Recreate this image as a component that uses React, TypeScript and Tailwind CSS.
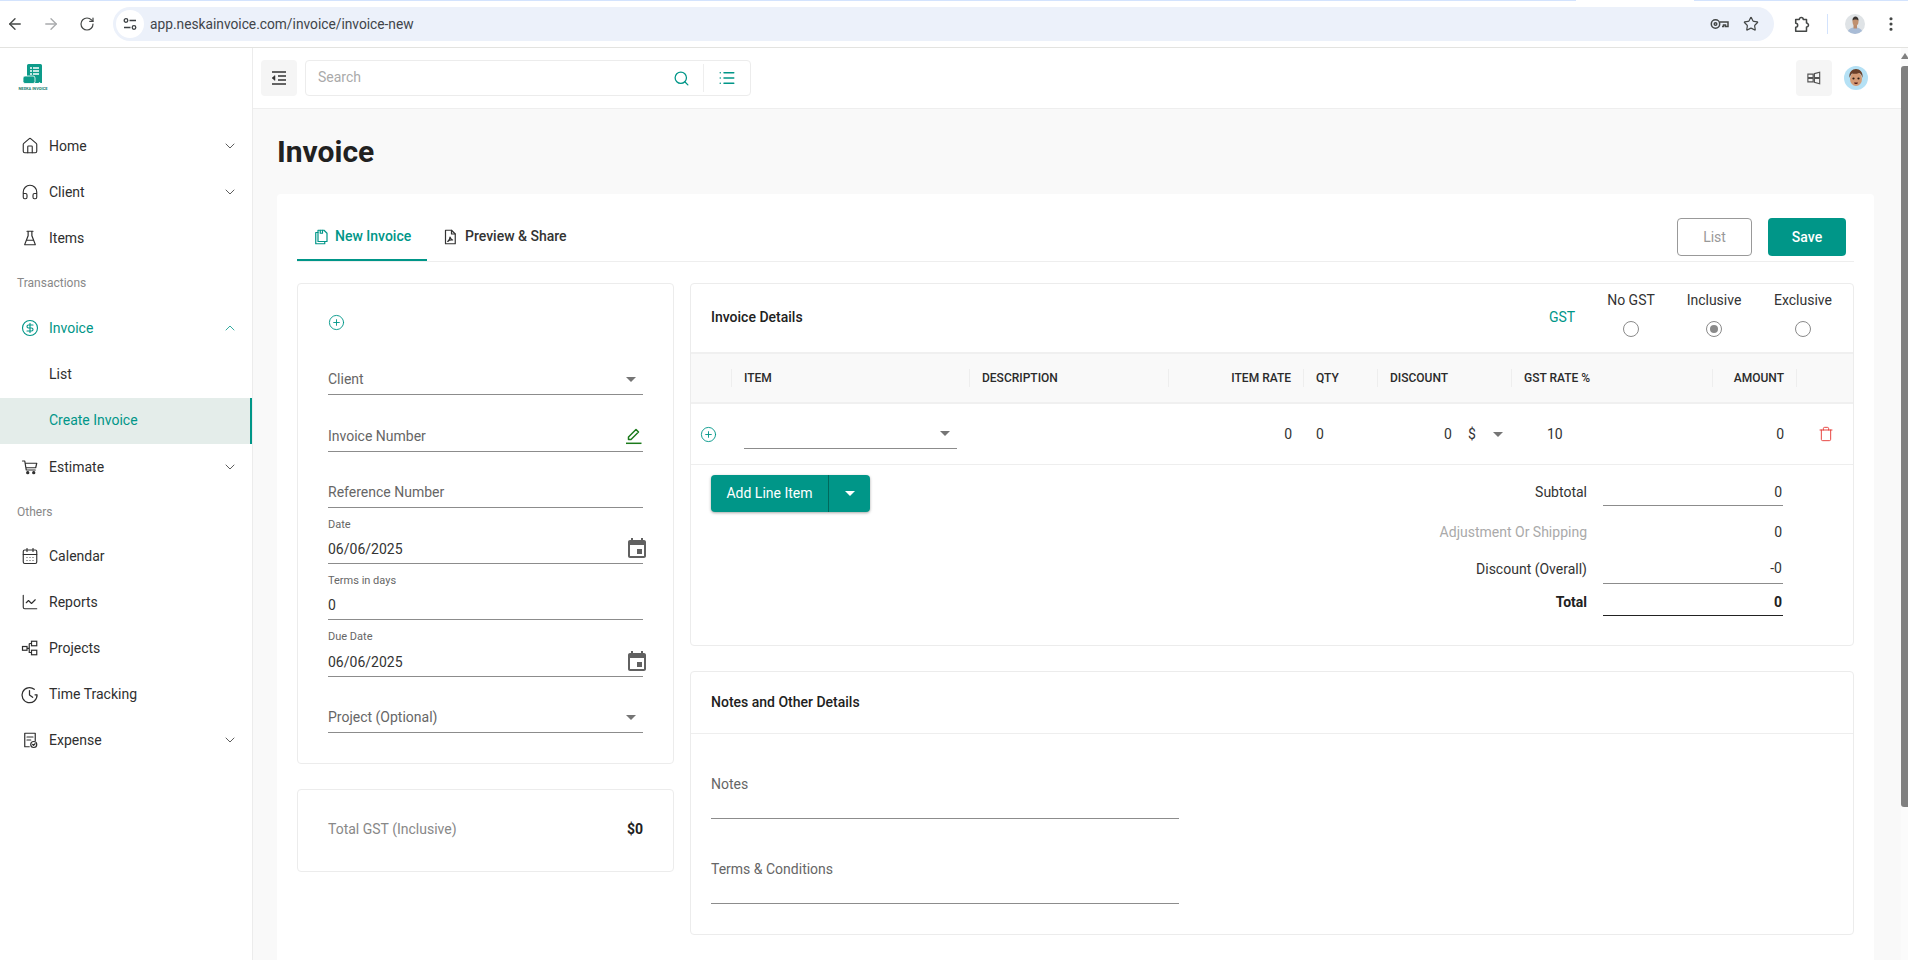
import type { ReactNode } from 'react'
import {
  ArrowLeft,
  ArrowRight,
  CalendarDays,
  ChartLine,
  ChevronDown,
  ChevronUp,
  CirclePlus,
  CircleDollarSign,
  EllipsisVertical,
  Headphones,
  House,
  List,
  RotateCw,
  Search,
  Star,
  Trash,
} from 'lucide-react'

// small hand drawn glyphs, lucide has no close match for these

function Caret({ color = '#757575' }: { color?: string }) {
  return (
    <svg width="10" height="5" viewBox="0 0 10 5" className="shrink-0">
      <polygon points="0,0 10,0 5,5" fill={color} />
    </svg>
  )
}

function Glyph({ children, size = 18, className = '' }: { children: ReactNode; size?: number; className?: string }) {
  return (
    <svg
      width={size}
      height={size}
      viewBox="0 0 24 24"
      fill="none"
      stroke="currentColor"
      strokeWidth="1.6"
      strokeLinecap="round"
      strokeLinejoin="round"
      className={`shrink-0 ${className}`}
    >
      {children}
    </svg>
  )
}

function FlaskIcon() {
  return (
    <Glyph>
      <path d="M8 3h8M9.500 3v6L5 20.500V21h14v-.5L14.500 9V3M7.500 15h9" />
    </Glyph>
  )
}

function CartIcon() {
  return (
    <Glyph>
      <path d="M2 4h3l2 12h12M5.600 7H21l-1.400 6H6.600" />
      <circle cx="9" cy="19.500" r="1.400" fill="currentColor" />
      <circle cx="17" cy="19.500" r="1.400" fill="currentColor" />
    </Glyph>
  )
}

function ProjectsIcon() {
  return (
    <Glyph>
      <g strokeLinejoin="miter" strokeLinecap="butt">
        <rect x="2" y="10" width="6" height="5" />
        <rect x="14" y="3" width="7" height="6" />
        <rect x="14" y="15" width="7" height="6" />
        <path d="M8 12.500h3M11 6v12.500M11 6h3M11 18h3" />
      </g>
    </Glyph>
  )
}

function ClockIcon() {
  return (
    <Glyph size={19}>
      <path d="M18 5.500A9.500 9.500 0 1 0 21.500 12.500" />
      <path d="M12 7v5.500l4 3M21 12.500l-2-.1" />
    </Glyph>
  )
}

function ExpenseIcon() {
  return (
    <Glyph>
      <path d="M11 21H5V3h14v10" />
      <path d="M8 8h8M8 12h5" />
      <circle cx="17" cy="18" r="4" />
      <path d="m15.500 18 1.200 1.200 2-2.200" />
    </Glyph>
  )
}

function CopyFileIcon() {
  return (
    <Glyph size={18}>
      <path d="M8 6H5v15h12v-3" />
      <path d="M8 3h8l4 4v11H8z" />
      <path d="M11 3v4h3V3" />
    </Glyph>
  )
}

function PdfFileIcon() {
  return (
    <Glyph size={18}>
      <path d="M6 3h8l5 5v13H6z" />
      <path d="M14 3v5h5M9 18c2-1.500 3-4 3-6 .5 2 2 3.500 3.500 4-2-.3-4.500 0-6.500 2z" />
    </Glyph>
  )
}

function EventIcon() {
  return (
    <svg width="24" height="24" viewBox="0 0 24 24" fill="#616161" className="-mr-[6px] -mt-[2px] shrink-0">
      <path d="M17 12h-5v5h5v-5zM16 1v2H8V1H6v2H5c-1.110 0-1.990.9-1.990 2L3 19c0 1.100.89 2 2 2h14c1.100 0 2-.9 2-2V5c0-1.100-.9-2-2-2h-1V1h-2zm3 18H5V8h14v11z" />
    </svg>
  )
}

function PencilIcon() {
  return (
    <svg width="18" height="18" viewBox="0 0 18 18" fill="none" stroke="#1b7a1b" strokeWidth="1.500" className="shrink-0">
      <path d="M3.500 12.500v-2.500l7.500-7.500 2.500 2.500-7.500 7.500z" strokeLinejoin="round" />
      <path d="M1 16.300h15.500" />
    </svg>
  )
}

function TuneIcon() {
  return (
    <svg width="14" height="14" viewBox="0 0 14 14" fill="none" stroke="#3c4043" strokeWidth="1.300">
      <circle cx="3" cy="3.500" r="1.800" />
      <path d="M6.500 3.500H13M1 10.500h6.500" />
      <circle cx="11" cy="10.500" r="1.800" />
    </svg>
  )
}

function KeyIcon() {
  return (
    <svg width="19" height="12" viewBox="0 0 19 12" fill="none" stroke="#444746" strokeWidth="1.500">
      <circle cx="5.500" cy="6" r="4.200" />
      <circle cx="5.500" cy="6" r="1.300" />
      <path d="M9.700 4h8.300v4.500h-2.500V7h-2v1.500h-1.500M9.700 8" />
    </svg>
  )
}

function ExtensionIcon() {
  return (
    <svg width="18" height="18" viewBox="0 0 20 20" fill="none" stroke="#444746" strokeWidth="1.700" strokeLinejoin="round">
      <path d="M3 5h4a2.200 2.200 0 1 1 4.400 0H15v4a2.200 2.200 0 1 1 0 4.400V18H3v-4.500a2.200 2.200 0 1 0 0-4.400z" />
    </svg>
  )
}

function IndentIcon() {
  return (
    <svg width="16" height="14" viewBox="0 0 16 14" fill="none" stroke="#333" strokeWidth="1.300">
      <path d="M1 1h14M7 5h8M7 9h8M1 13h14" />
      <polygon points="4,4.500 4,9.500 1,7" fill="#333" strokeWidth="0.500" />
    </svg>
  )
}

function WindowsIcon() {
  return (
    <svg width="14" height="14" viewBox="0 0 16 16" fill="none" stroke="#555" strokeWidth="1.300">
      <path d="M1 3.500h6v4H1zM1 8.500h6v4H1zM8.500 3l6-1.500v6h-6zM8.500 8.500h6v6l-6-1.500z" />
    </svg>
  )
}

function Logo() {
  return (
    <div className="flex w-[28px] flex-col items-center">
      <svg width="22" height="20" viewBox="0 0 22 20">
        <path d="M5 1.500Q5 0 6.500 0h12Q20 0 20 1.500V19h-1.500l-1-1-1 1H5z" fill="#0d9b8a" />
        <rect x="1" y="12" width="12" height="7.500" rx="2" fill="#0d9b8a" stroke="#fff" strokeWidth="0.800" />
        <path d="M8 4h2M11 4h6M8 7h2M11 7h6M8 10h2M11 10h6" stroke="#fff" strokeWidth="1.300" />
      </svg>
      <span className="mt-[3px] text-[4px] leading-[4px] font-bold whitespace-nowrap text-[#137a6e]">NESKA INVOICE</span>
    </div>
  )
}

function BrowserAvatar() {
  return (
    <svg width="20" height="20" viewBox="0 0 20 20" className="rounded-full">
      <rect width="20" height="20" fill="#dfe3e6" />
      <path d="M2 20c.5-5 4-6.500 8-6.500s7.500 1.500 8 6.500z" fill="#a9bcd6" />
      <rect x="8.500" y="10" width="3.500" height="4.500" fill="#b98a6c" />
      <ellipse cx="10.500" cy="7.500" rx="3" ry="4" fill="#c0906f" />
      <path d="M7.500 6.500c0-3 1.500-4 3-4s3 1 3 4c-1-1.500-5-1.500-6 0z" fill="#3a3330" />
    </svg>
  )
}

function MemojiAvatar() {
  return (
    <svg width="24" height="24" viewBox="0 0 24 24" className="rounded-full">
      <rect width="24" height="24" fill="#b5e1f5" />
      <ellipse cx="12" cy="13" rx="6" ry="7" fill="#d39a74" />
      <path d="M5.500 12c-1-6 3-9 6.500-9s7.500 3 6.500 9c-.5-3-2-4.500-3.500-5-2 1-5.500 1-7 .5-1 1-2 2.500-2.500 4.500z" fill="#6a3f28" />
      <circle cx="9.500" cy="12.500" r="1.100" fill="#2b1c14" />
      <circle cx="14.500" cy="12.500" r="1.100" fill="#2b1c14" />
      <path d="M10 16.500h4l-.8 1.500h-2.400z" fill="#5a1f1a" />
    </svg>
  )
}

function BrowserBar() {
  return (
    <header className="flex h-[48px] shrink-0 flex-col border-b border-[#e3e3e0] bg-white">
      <div className="flex h-[1px] shrink-0">
        <div className="w-[1576px] bg-[#d3e3fd]" />
        <div className="w-[118px] bg-white" />
        <div className="flex-1 bg-[#d3e3fd]" />
      </div>
      <div className="flex flex-1 items-center text-[#444746]">
        <div className="flex w-[113px] shrink-0 items-center pl-[6px]">
          <ArrowLeft size={18} strokeWidth={1.800} />
          <ArrowRight size={18} strokeWidth={1.800} className="ml-[18px] text-[#a9abad]" />
          <RotateCw size={16} strokeWidth={1.800} className="ml-[19px]" />
        </div>
        <div className="flex h-[34px] w-[1661px] shrink-0 items-center rounded-full bg-[#ecf1fa] pr-[15px] pl-[3px]">
          <div className="flex h-[28px] w-[28px] items-center justify-center rounded-full bg-white">
            <TuneIcon />
          </div>
          <span className="ml-[6px] flex-1 text-[13.750px] text-[#41454a]">app.neskainvoice.com/invoice/invoice-new</span>
          <KeyIcon />
          <Star size={16} strokeWidth={1.800} className="ml-[14px]" />
        </div>
        <span className="ml-[19px]">
          <ExtensionIcon />
        </span>
        <div className="ml-[16px] h-[20px] w-px bg-[#d3e3fd]" />
        <div className="ml-[17px]">
          <BrowserAvatar />
        </div>
        <EllipsisVertical size={18} strokeWidth={2.200} className="ml-[17px]" />
      </div>
    </header>
  )
}

function NavRow({
  icon,
  label,
  chevron,
  active,
}: {
  icon?: ReactNode
  label: string
  chevron?: 'up' | 'down'
  active?: boolean
}) {
  return (
    <div className={`flex h-[46px] items-center pr-[14px] text-[14px] ${active ? 'text-[#009688]' : 'text-[#2f2f2f]'}`}>
      <span className="flex w-[49px] shrink-0 justify-center pl-[10px]">{icon}</span>
      <span className="flex-1">{label}</span>
      {chevron === 'down' && <ChevronDown size={16} strokeWidth={1.200} className="text-[#333]" />}
      {chevron === 'up' && <ChevronUp size={16} strokeWidth={1.200} className="text-[#009688]" />}
    </div>
  )
}

function Sidebar() {
  return (
    <aside className="w-[253px] shrink-0 border-r border-[#ececec] bg-white">
      <div className="flex h-[75px] items-start pt-[16px] pl-[19px]">
        <Logo />
      </div>
      <NavRow icon={<House size={18} strokeWidth={1.500} />} label="Home" chevron="down" />
      <NavRow icon={<Headphones size={18} strokeWidth={1.500} />} label="Client" chevron="down" />
      <NavRow icon={<FlaskIcon />} label="Items" />
      <div className="flex h-[44px] items-center pl-[17px] text-[12px] text-[#888]">Transactions</div>
      <NavRow active icon={<CircleDollarSign size={18} strokeWidth={1.500} />} label="Invoice" chevron="up" />
      <NavRow label="List" />
      <div className="mt-px flex h-[46px] items-center border-r-2 border-[#009688] bg-[#e4edea] pb-px pl-[49px] text-[14px] text-[#009688]">
        Create Invoice
      </div>
      <NavRow icon={<CartIcon />} label="Estimate" chevron="down" />
      <div className="flex h-[43px] items-center pl-[17px] text-[12px] text-[#888]">Others</div>
      <NavRow icon={<CalendarDays size={18} strokeWidth={1.500} />} label="Calendar" />
      <NavRow icon={<ChartLine size={18} strokeWidth={1.500} />} label="Reports" />
      <NavRow icon={<ProjectsIcon />} label="Projects" />
      <NavRow icon={<ClockIcon />} label="Time Tracking" />
      <NavRow icon={<ExpenseIcon />} label="Expense" chevron="down" />
    </aside>
  )
}

function TopBar() {
  return (
    <div className="flex h-[61px] shrink-0 items-center border-b border-[#eeeeee] bg-white pr-[33px] pl-[8px]">
      <button className="flex h-[36px] w-[36px] items-center justify-center rounded-[4px] bg-[#f5f5f5]">
        <IndentIcon />
      </button>
      <div className="ml-[8px] flex h-[36px] w-[446px] items-center rounded-[4px] border border-[#ececec] pl-[12px] text-[14px] text-[#aaa]">
        <span className="flex-1 pb-[2px]">Search</span>
        <Search size={17} strokeWidth={1.800} className="mr-[13px] text-[#009688]" />
        <div className="h-[28px] w-px bg-[#eeeeee]" />
        <List size={18} strokeWidth={2} className="mx-[14px] text-[#009688]" />
      </div>
      <div className="flex-1" />
      <button className="flex h-[36px] w-[36px] items-center justify-center rounded-[4px] bg-[#f5f5f5]">
        <WindowsIcon />
      </button>
      <div className="ml-[12px]">
        <MemojiAvatar />
      </div>
    </div>
  )
}

function Line({ className = '', children }: { className?: string; children?: ReactNode }) {
  return (
    <div className={`flex h-[30px] items-center justify-between border-b border-[#8c8c8c] text-[14px] ${className}`}>
      {children}
    </div>
  )
}

function SmallLabel({ className = '', children }: { className?: string; children: ReactNode }) {
  return <div className={`flex h-[16px] items-center text-[11px] text-[#666] ${className}`}>{children}</div>
}

function InvoiceForm() {
  return (
    <div className="rounded-[4px] border border-[#ececec] pt-[30px] pr-[30px] pb-[30px] pl-[30px]">
      <CirclePlus size={17} strokeWidth={1.300} className="text-[#009688]" />
      <Line className="mt-[34px] pb-px text-[#666]">
        Client
        <span className="pr-[7px]">
          <Caret />
        </span>
      </Line>
      <Line className="mt-[27px] pb-px text-[#666]">
        Invoice Number
        <PencilIcon />
      </Line>
      <Line className="mt-[26px] pb-px text-[#666]">Reference Number</Line>
      <SmallLabel className="mt-[9px]">Date</SmallLabel>
      <Line className="mt-[1px] pt-[2px] text-[#333]">
        06/06/2025
        <EventIcon />
      </Line>
      <SmallLabel className="mt-[9px]">Terms in days</SmallLabel>
      <Line className="mt-[1px] pt-[2px] text-[#333]">0</Line>
      <SmallLabel className="mt-[9px]">Due Date</SmallLabel>
      <Line className="mt-[2px] pt-[2px] text-[#333]">
        06/06/2025
        <EventIcon />
      </Line>
      <Line className="mt-[26px] pb-px text-[#666]">
        Project (Optional)
        <span className="pr-[7px]">
          <Caret />
        </span>
      </Line>
    </div>
  )
}

function Radio({ label, checked, width }: { label: string; checked?: boolean; width: string }) {
  return (
    <div className={`-mt-[5px] flex flex-col items-center gap-[13px] text-[14px] text-[#333] ${width}`}>
      <span className="leading-[16px]">{label}</span>
      <span className="flex h-[16px] w-[16px] items-center justify-center rounded-full border border-[#8a8a8a]">
        {checked && <span className="h-[8px] w-[8px] rounded-full bg-[#8a8a8a]" />}
      </span>
    </div>
  )
}

const tableCols = 'grid grid-cols-[40px_238px_199px_135px_74px_134px_201px_84px_57px]'

function HeadCell({ label, right }: { label?: string; right?: boolean }) {
  return (
    <div className={`flex h-[18px] items-center border-l border-[#eeeeee] px-[12px] ${right ? 'justify-end' : ''}`}>
      {label}
    </div>
  )
}

function TotalRow({
  label,
  value,
  className = '',
  textClass = '',
  labelClass = 'text-[#333]',
  valueClass = 'border-b border-[#8c8c8c] text-[#333]',
}: {
  label: string
  value: string
  className?: string
  textClass?: string
  labelClass?: string
  valueClass?: string
}) {
  return (
    <div className={`flex h-[30px] items-center justify-end gap-[16px] text-[14px] ${className}`}>
      <span className={`${labelClass} ${textClass}`}>{label}</span>
      <span className={`flex h-[30px] w-[180px] items-center justify-end pr-px ${valueClass} ${textClass}`}>{value}</span>
    </div>
  )
}

function InvoiceDetails() {
  return (
    <div className="flex h-[363px] flex-col rounded-[4px] border border-[#ececec]">
      <div className="flex h-[68px] shrink-0 items-center justify-between pr-[6px] pb-[2px] pl-[20px]">
        <span className="text-[14px] font-medium text-[#212121]">Invoice Details</span>
        <div className="flex items-center">
          <span className="w-[44px] text-[14px] text-[#009688]">GST</span>
          <Radio label="No GST" width="w-[76px]" />
          <Radio label="Inclusive" checked width="w-[90px]" />
          <Radio label="Exclusive" width="w-[88px]" />
        </div>
      </div>
      <div className={`${tableCols} h-[52px] shrink-0 items-center border-y-2 border-[#f0f0f0] bg-[#f9f9f9] text-[12px] font-medium text-[#2b2b2b]`}>
        <div />
        <HeadCell label="ITEM" />
        <HeadCell label="DESCRIPTION" />
        <HeadCell label="ITEM RATE" right />
        <HeadCell label="QTY" />
        <HeadCell label="DISCOUNT" />
        <HeadCell label="GST RATE %" />
        <HeadCell label="AMOUNT" right />
        <HeadCell />
      </div>
      <div className={`${tableCols} h-[61px] shrink-0 items-center border-b border-[#eeeeee] text-[14px] text-[#333]`}>
        <div className="pl-[9px]">
          <CirclePlus size={17} strokeWidth={1.300} className="text-[#009688]" />
        </div>
        <div className="pr-[12px] pl-[13px]">
          <div className="flex h-[30px] items-center justify-end border-b border-[#8c8c8c] pr-[7px]">
            <Caret />
          </div>
        </div>
        <div />
        <div className="pr-[11px] text-right">0</div>
        <div className="pl-[13px]">0</div>
        <div className="flex items-center pl-[67px]">
          <span className="w-[16px]">0</span>
          <span className="w-[33px] pl-[8px]">$</span>
          <Caret />
        </div>
        <div className="pl-[36px]">10</div>
        <div className="pr-[12px] text-right">0</div>
        <div className="pl-[22px]">
          <Trash size={16} strokeWidth={1.400} className="text-[#e53935]" />
        </div>
      </div>
      <div className="flex flex-1 items-start justify-between pt-[10px] pr-[70px] pl-[20px]">
        <div className="flex h-[37px] items-center rounded-[4px] bg-[#009688] text-[14px] text-white shadow-[0_1px_3px_rgba(0,0,0,0.35)]">
          <span className="flex h-full w-[118px] items-center justify-center border-r border-[#00695c] pb-px">Add Line Item</span>
          <span className="flex w-[41px] justify-center">
            <Caret color="#ffffff" />
          </span>
        </div>
        <div className="mt-px flex flex-col">
          <TotalRow textClass="pt-[3px]" label="Subtotal" value="0" />
          <TotalRow className="mt-[11px]" label="Adjustment Or Shipping" labelClass="text-[#aaa]" valueClass="text-[#333]" value="0" />
          <TotalRow className="mt-[7px]" label="Discount (Overall)" value="-0" />
          <TotalRow
            className="mt-[2px] font-bold"
            textClass="pt-[3px]"
            label="Total"
            labelClass="text-[#212121]"
            valueClass="border-b border-[#222] text-[#212121]"
            value="0"
          />
        </div>
      </div>
    </div>
  )
}

function NotesCard() {
  return (
    <div className="mt-[25px] rounded-[4px] border border-[#ececec] px-[20px] pb-[30px]">
      <div className="-mx-[20px] flex h-[62px] items-center border-b border-[#eeeeee] px-[20px] text-[14px] font-medium text-[#212121]">
        Notes and Other Details
      </div>
      <div className="mt-[38px] h-[47px] w-[468px] border-b border-[#8c8c8c] text-[14px] leading-[24px] text-[#666]">Notes</div>
      <div className="mt-[38px] h-[47px] w-[468px] border-b border-[#8c8c8c] text-[14px] leading-[24px] text-[#666]">
        Terms &amp; Conditions
      </div>
    </div>
  )
}

export default function App() {
  return (
    <div className="flex h-[960px] w-[1908px] flex-col overflow-hidden bg-white font-['Roboto',sans-serif]">
      <BrowserBar />
      <div className="flex min-h-0 flex-1">
        <Sidebar />
        <main className="flex min-w-0 flex-1 flex-col">
          <TopBar />
          <div className="flex min-h-0 flex-1 flex-col bg-[#f9f9f9] pr-[27px] pl-[24px]">
            <div className="flex h-[85px] shrink-0 items-center text-[30px] font-bold text-[#212121]">Invoice</div>
            <div className="flex-1 rounded-t-[4px] bg-white px-[20px]">
              <div className="flex h-[68px] items-end border-b border-[#eeeeee]">
                <div className="flex h-[68px] w-[130px] items-center gap-[5px] border-b-2 border-[#009688] pt-[21px] pl-[15px] text-[14px] font-medium text-[#009688]">
                  <CopyFileIcon />
                  New Invoice
                </div>
                <div className="flex h-[68px] items-center gap-[6px] pt-[21px] pb-[2px] pl-[14px] text-[14px] font-medium text-[#333]">
                  <PdfFileIcon />
                  Preview &amp; Share
                </div>
                <div className="flex-1" />
                <div className="flex h-[68px] items-start gap-[16px] pt-[25px]">
                  <button className="h-[38px] w-[75px] rounded-[4px] border border-[#999] text-[14px] text-[#999]">List</button>
                  <button className="mr-[8px] h-[38px] w-[78px] rounded-[4px] bg-[#009688] text-[14px] font-medium text-white">Save</button>
                </div>
              </div>
              <div className="mt-[21px] flex gap-[16px]">
                <div className="w-[377px] shrink-0">
                  <InvoiceForm />
                  <div className="mt-[25px] flex h-[83px] items-center justify-between rounded-[4px] border border-[#ececec] pr-[30px] pb-[2px] pl-[30px] text-[14px]">
                    <span className="text-[#888]">Total GST (Inclusive)</span>
                    <span className="font-bold text-[#212121]">$0</span>
                  </div>
                </div>
                <div className="min-w-0 flex-1">
                  <InvoiceDetails />
                  <NotesCard />
                </div>
              </div>
            </div>
          </div>
        </main>
        <div className="flex w-[7px] shrink-0 flex-col items-center bg-[#fbfbfb] pt-[5px]">
          <div className="h-0 w-0 border-x-[4px] border-b-[6px] border-x-transparent border-b-[#808080]" />
          <div className="mt-[7px] h-[741px] w-[7px] rounded-l-[3px] bg-[#808080]" />
        </div>
      </div>
    </div>
  )
}
